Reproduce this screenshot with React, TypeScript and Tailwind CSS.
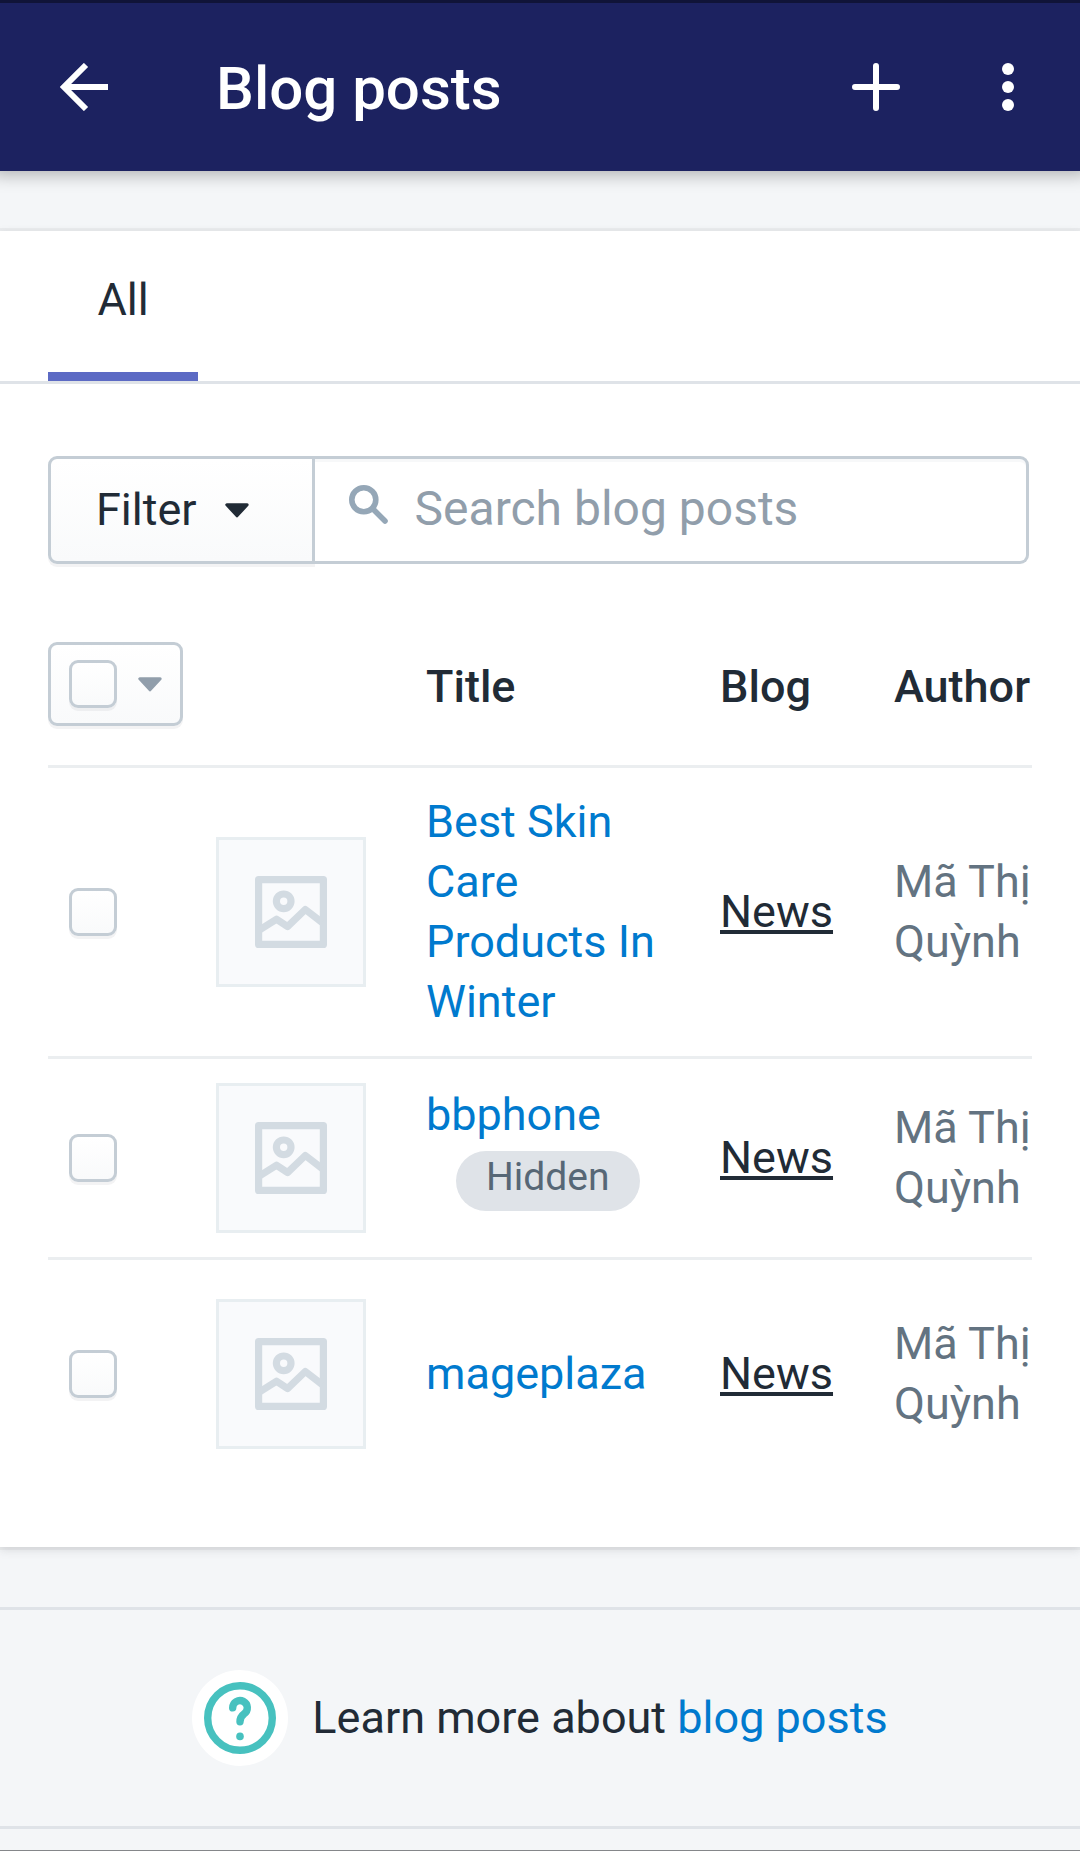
import React from "react";

type Post = { title: string; blog: string; author: string; hidden?: boolean };

const posts: Post[] = [
  { title: "Best Skin Care Products In Winter", blog: "News", author: "Mã Thị Quỳnh" },
  { title: "bbphone", blog: "News", author: "Mã Thị Quỳnh", hidden: true },
  { title: "mageplaza", blog: "News", author: "Mã Thị Quỳnh" },
];

function BackIcon() {
  return (
    <svg viewBox="0 0 48 48" className="size-12" fill="none" stroke="currentColor" strokeWidth="6" aria-hidden="true">
      <path d="M26 2 4 24l22 22M4 24h44" />
    </svg>
  );
}

function PlusIcon() {
  return (
    <svg viewBox="0 0 48 48" className="size-12" fill="none" stroke="currentColor" strokeWidth="6" strokeLinecap="round" aria-hidden="true">
      <path d="M24 3v42M3 24h42" />
    </svg>
  );
}

function MoreIcon() {
  return (
    <svg viewBox="0 0 12 48" className="h-12 w-3" fill="currentColor" aria-hidden="true">
      <circle cx="6" cy="6" r="6" />
      <circle cx="6" cy="24" r="6" />
      <circle cx="6" cy="42" r="6" />
    </svg>
  );
}

function CaretIcon() {
  return (
    <svg viewBox="0 0 24 15" className="h-[15px] w-6 shrink-0" fill="currentColor" stroke="currentColor" strokeWidth="3" strokeLinejoin="round" aria-hidden="true">
      <path d="M1.8 1.8h20.4L12 12.8z" />
    </svg>
  );
}

function SearchIcon() {
  return (
    <svg viewBox="0 0 39 39" className="size-[39px] shrink-0" fill="none" stroke="#95a7b7" strokeWidth="5.6" strokeLinecap="round" aria-hidden="true">
      <circle cx="14.8" cy="14.8" r="12" />
      <path d="M23.5 23.5 36 36" />
    </svg>
  );
}

function ImageIcon() {
  return (
    <svg viewBox="0 0 72 72" className="size-18" fill="none" stroke="#d3dbe2" strokeWidth="7.2" strokeLinejoin="round" aria-hidden="true">
      <path d="M3.6 3.6h64.8v64.8H3.6z" />
      <circle cx="28.7" cy="25.3" r="7.3" />
      <path d="M4 54.2 21.5 43.2l11 7.4 17.8-17.1L67 46.4" />
    </svg>
  );
}

function HelpIcon() {
  return (
    <svg viewBox="0 0 72 72" className="size-18" fill="none" stroke="#47c1bf" strokeWidth="7.4" strokeLinecap="round" aria-hidden="true">
      <circle cx="36" cy="36" r="32.3" />
      <path d="M28.7 25.9A7.3 7.3 0 1 1 40.2 31.8C37.5 33.8 36 36 36 39.8" />
      <circle cx="36" cy="54.4" r="3.8" fill="#47c1bf" stroke="none" />
    </svg>
  );
}

function Checkbox({ label }: { label: string }) {
  return (
    <input
      type="checkbox"
      aria-label={label}
      className="block size-12 shrink-0 appearance-none rounded-[9px] border-3 border-[#c4cdd5] bg-linear-to-b from-white to-[#f9fafb] shadow-[0_3px_0_rgba(22,29,37,0.05)] checked:to-[#5c6ac4]"
    />
  );
}

export default function App() {
  return (
    <div className="flex min-h-screen flex-col border-b border-[#85878a] bg-[#f4f6f8] font-['Roboto',sans-serif] text-[45px] leading-[60px] text-[#212b36]">
      <header className="z-10 flex h-[171px] items-center border-t-3 border-[#101438] bg-[#1c2260] pr-[66px] pl-15 text-white shadow-[0_-4px_16px_8px_rgba(0,0,0,0.28)]">
        <button type="button" aria-label="Back">
          <BackIcon />
        </button>
        <h1 className="flex-1 pt-1 pl-[108px] text-[60px] font-medium">Blog posts</h1>
        <button type="button" aria-label="Add blog post" className="mr-[102px]">
          <PlusIcon />
        </button>
        <button type="button" aria-label="More options">
          <MoreIcon />
        </button>
      </header>

      <main className="mt-15 bg-white pb-[58px] shadow-[0_0_0_3px_rgba(63,63,68,0.05),0_3px_9px_rgba(63,63,68,0.15)]">
        <div role="tablist" className="flex border-b-3 border-[#dfe3e8] px-12">
          <button type="button" role="tab" aria-selected="true" className="min-w-[150px] border-b-9 border-[#5c6ac4] px-12 pt-[39px] pb-[42px]">
            All
          </button>
        </div>

        <div className="mt-18 mr-[51px] ml-12 flex h-27">
          <button
            type="button"
            className="flex items-center gap-7 rounded-l-[9px] border-3 border-[#c4cdd5] bg-linear-to-b from-white to-[#f9fafb] pr-[63px] pl-[45px] shadow-[0_3px_0_rgba(22,29,37,0.05)]"
          >
            Filter
            <CaretIcon />
          </button>
          <label className="flex min-w-0 flex-1 items-center gap-[27px] rounded-r-[9px] border-3 border-l-0 border-[#c4cdd5] px-[34px] shadow-[inset_0_3px_0_rgba(99,115,129,0.05)]">
            <span className="pb-3">
              <SearchIcon />
            </span>
            <input
              type="text"
              aria-label="Search blog posts"
              placeholder="Search blog posts"
              className="min-w-0 flex-1 pb-0.5 text-[48px] outline-none placeholder:text-[#919eab]"
            />
          </label>
        </div>

        <div className="mt-[39px] px-12">
          <table className="w-full table-fixed text-left">
            <colgroup>
              <col className="w-[168px]" />
              <col className="w-[210px]" />
              <col />
              <col className="w-[174px]" />
              <col className="w-[138px]" />
            </colgroup>
            <thead>
              <tr className="border-b-3 border-[#ebeef0]">
                <th className="py-[39px] font-medium">
                  <div className="flex h-21 w-[135px] items-center gap-[21px] rounded-[9px] border-3 border-[#c4cdd5] bg-linear-to-b from-white to-[#f9fafb] pl-[18px] shadow-[0_3px_0_rgba(22,29,37,0.05)]">
                    <Checkbox label="Select all blog posts" />
                    <button type="button" aria-label="Selection options" className="text-[#919eab]">
                      <CaretIcon />
                    </button>
                  </div>
                </th>
                <td />
                <th className="pt-1.5 font-medium">Title</th>
                <th className="pt-1.5 font-medium">Blog</th>
                <th className="pt-1.5 font-medium">Author</th>
              </tr>
            </thead>
            <tbody>
              {posts.map((post) => (
                <tr key={post.title} className="border-b-3 border-[#ebeef0] last:h-[230px] last:border-b-0">
                  <td className="pl-[21px]">
                    <Checkbox label={"Select " + post.title} />
                  </td>
                  <td className="py-6">
                    <div className="flex size-[150px] items-center justify-center border-3 border-[#e8eef1] bg-[#f9fafc]">
                      <ImageIcon />
                    </div>
                  </td>
                  <td className="py-6 pr-14">
                    <a href="#" className="block text-[#007ace]">
                      {post.title}
                    </a>
                    {post.hidden && (
                      <span className="mt-1.5 mb-5 ml-[30px] block w-fit rounded-full bg-[#dfe3e8] px-[30px] pb-2 text-[39px] leading-[52px] text-[#576776]">
                        Hidden
                      </span>
                    )}
                  </td>
                  <td>
                    <a href="#" className="underline">
                      {post.blog}
                    </a>
                  </td>
                  <td className="text-[#637381]">{post.author}</td>
                </tr>
              ))}
            </tbody>
          </table>
        </div>
      </main>

      <footer className="mt-15 flex items-center justify-center gap-6 border-y-3 border-[#dfe3e8] py-15">
        <div className="flex size-24 items-center justify-center rounded-full bg-white">
          <HelpIcon />
        </div>
        <p>
          Learn more about{" "}
          <a href="#" className="text-[#007ace]">
            blog posts
          </a>
        </p>
      </footer>
    </div>
  );
}
